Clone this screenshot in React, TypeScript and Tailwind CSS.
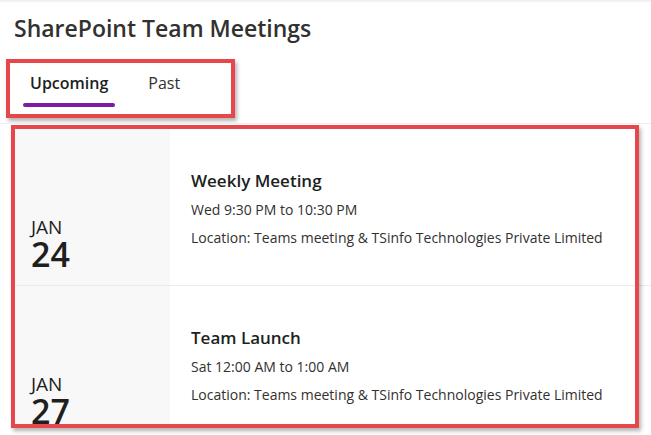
import * as React from "react"

const events = [
  {
    month: "JAN",
    day: "24",
    title: "Weekly Meeting",
    time: "Wed 9:30 PM to 10:30 PM",
    location: "Location: Teams meeting & TSinfo Technologies Private Limited",
  },
  {
    month: "JAN",
    day: "27",
    title: "Team Launch",
    time: "Sat 12:00 AM to 1:00 AM",
    location: "Location: Teams meeting & TSinfo Technologies Private Limited",
  },
]

export default function App() {
  return (
    <div className="relative w-[651px] h-[435px] overflow-hidden bg-white font-['Open_Sans',sans-serif] text-[#323130]">
      {/* faint shadow along the top edge */}
      <div className="h-[3px] bg-gradient-to-b from-[#ececec] to-white" />

      <h1 className="pl-[14px] pt-[9px] pb-[2px] text-[23px] leading-[32px] font-semibold">
        SharePoint Team Meetings
      </h1>

      {/* Tabs (annotated) */}
      <div className="ml-[6px] mt-[13px] w-[229px] h-[59px] border-[4px] border-[#e5474b] shadow-[2px_3px_4px_rgba(0,0,0,0.3)]">
        <div className="flex gap-[26px] pl-[13px] pt-[8px]">
          <div className="flex flex-col items-center">
            <span className="px-[7px] text-[16px] leading-[24px] font-semibold text-[#201f1e]">Upcoming</span>
            <div className="mt-[8px] h-[4px] w-full rounded-full bg-[#7a1ca6]" />
          </div>
          <span className="px-[7px] text-[16px] leading-[24px] text-[#323130]">Past</span>
        </div>
      </div>

      {/* Event list */}
      <div className="mt-[5px] h-[305px] overflow-hidden border-t border-[#efefef] pt-[5px] pl-[12px]">
        {events.map((ev, i) => (
          <div key={i} className="flex h-[157px] border-b border-[#edebe9]">
            <div className="w-[158px] shrink-0 bg-[#f8f8f8] pl-[19px] pb-[14px] flex flex-col justify-end text-[#201f1e]">
              <div className="text-[19px] leading-[20px]">{ev.month}</div>
              <div className="text-[34px] leading-[34px] font-semibold">{ev.day}</div>
            </div>
            <div className="pl-[21px] pt-[40px]">
              <div className="text-[17px] leading-[24px] font-semibold text-[#201f1e]">{ev.title}</div>
              <div className="mt-[7px] text-[14px] leading-[20px]">{ev.time}</div>
              <div className="mt-[8px] text-[14px] leading-[20px]">{ev.location}</div>
            </div>
          </div>
        ))}
      </div>

      {/* annotation box over the list */}
      <div className="pointer-events-none absolute left-[11px] top-[125px] w-[628px] h-[303px] border-[4px] border-[#e5474b] shadow-[2px_3px_4px_rgba(0,0,0,0.3)]" />
    </div>
  )
}
